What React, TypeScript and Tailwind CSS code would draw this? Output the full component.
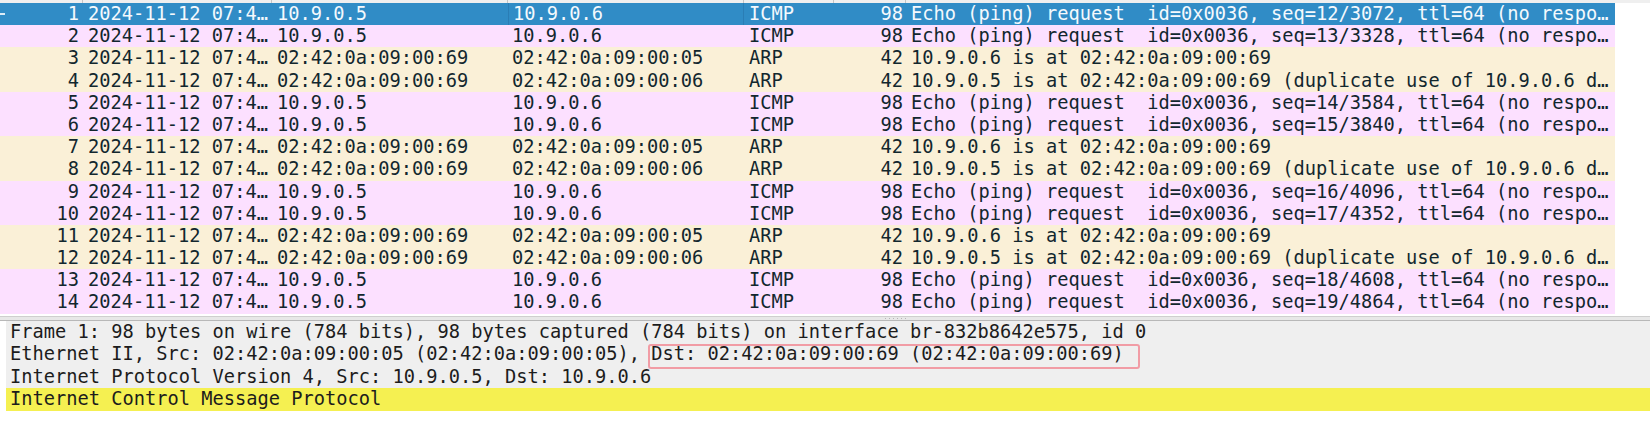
import React from "react";

type Packet = {
  no: number;
  src: string;
  dst: string;
  proto: "ICMP" | "ARP";
  len: number;
  info: string;
};

const MAC69 = "02:42:0a:09:00:69";

const echo = (seq: string) =>
  `Echo (ping) request  id=0x0036, seq=${seq}, ttl=64 (no respo…`;
const arpIs6 = "10.9.0.6 is at 02:42:0a:09:00:69";
const arpDup = "10.9.0.5 is at 02:42:0a:09:00:69 (duplicate use of 10.9.0.6 d…";

const packets: Packet[] = [
  { no: 1, src: "10.9.0.5", dst: "10.9.0.6", proto: "ICMP", len: 98, info: echo("12/3072") },
  { no: 2, src: "10.9.0.5", dst: "10.9.0.6", proto: "ICMP", len: 98, info: echo("13/3328") },
  { no: 3, src: MAC69, dst: "02:42:0a:09:00:05", proto: "ARP", len: 42, info: arpIs6 },
  { no: 4, src: MAC69, dst: "02:42:0a:09:00:06", proto: "ARP", len: 42, info: arpDup },
  { no: 5, src: "10.9.0.5", dst: "10.9.0.6", proto: "ICMP", len: 98, info: echo("14/3584") },
  { no: 6, src: "10.9.0.5", dst: "10.9.0.6", proto: "ICMP", len: 98, info: echo("15/3840") },
  { no: 7, src: MAC69, dst: "02:42:0a:09:00:05", proto: "ARP", len: 42, info: arpIs6 },
  { no: 8, src: MAC69, dst: "02:42:0a:09:00:06", proto: "ARP", len: 42, info: arpDup },
  { no: 9, src: "10.9.0.5", dst: "10.9.0.6", proto: "ICMP", len: 98, info: echo("16/4096") },
  { no: 10, src: "10.9.0.5", dst: "10.9.0.6", proto: "ICMP", len: 98, info: echo("17/4352") },
  { no: 11, src: MAC69, dst: "02:42:0a:09:00:05", proto: "ARP", len: 42, info: arpIs6 },
  { no: 12, src: MAC69, dst: "02:42:0a:09:00:06", proto: "ARP", len: 42, info: arpDup },
  { no: 13, src: "10.9.0.5", dst: "10.9.0.6", proto: "ICMP", len: 98, info: echo("18/4608") },
  { no: 14, src: "10.9.0.5", dst: "10.9.0.6", proto: "ICMP", len: 98, info: echo("19/4864") },
];

function PacketRow({ p }: { p: Packet }) {
  const selected = p.no === 1;
  const rowColor = selected
    ? "bg-[#308cc6] text-[#f4f9fd]"
    : p.proto === "ICMP"
      ? "bg-[#fce0ff] text-[#12272e]"
      : "bg-[#faf0d7] text-[#12272e]";

  return (
    <div className={`relative flex h-[22.2px] w-[1615px] items-center whitespace-pre ${rowColor}`}>
      {selected && <div className="absolute left-0 top-[10px] h-[1.5px] w-[5px] bg-[#dcecf7]" />}
      <div className="w-[83px] shrink-0 pr-[4px] text-right">{p.no}</div>
      <div className="w-[189px] shrink-0 pl-[5px]">2024-11-12 07:4…</div>
      <div className="w-[236px] shrink-0 pl-[5px]">{p.src}</div>
      <div
        className={`flex h-full w-[236px] shrink-0 items-center pl-[4px] ${
          selected ? "border-x border-[#2a7db5]" : ""
        }`}
      >
        {p.dst}
      </div>
      <div className="w-[90px] shrink-0 pl-[5px]">{p.proto}</div>
      <div className="w-[72px] shrink-0 pr-[3px] text-right">{p.len}</div>
      <div className="w-[709px] shrink-0 pl-[5px]">{p.info}</div>
    </div>
  );
}

export default function App() {
  return (
    <div
      className="h-[434px] w-[1650px] overflow-hidden bg-white text-[18.7px] leading-[22.2px]"
      style={{ fontFamily: '"DejaVu Sans Mono", "Liberation Mono", monospace' }}
    >
      {/* column header bottom edge */}
      <div className="flex h-[3px] w-full bg-[#efefef]">
        <div className="w-[83px] border-r border-[#c4c4c4]" />
        <div className="w-[189px] border-r border-[#c4c4c4]" />
        <div className="w-[236px] border-r border-[#c4c4c4]" />
        <div className="w-[236px] border-r border-[#c4c4c4]" />
        <div className="w-[90px] border-r border-[#c4c4c4]" />
        <div className="w-[72px] border-r border-[#c4c4c4]" />
      </div>

      <div className="flex flex-col">
        {packets.map((p) => (
          <PacketRow key={p.no} p={p} />
        ))}
      </div>

      {/* splitter */}
      <div className="h-[2px] bg-white" />
      <div className="flex h-[5px] flex-col">
        <div className="h-[1px] bg-[#cfcfcf]" />
        <div className="flex h-[3px] items-center justify-center bg-[#e8e8e8]">
          <div className="flex gap-[3px] pl-[140px]">
            {[0, 1, 2, 3, 4, 5].map((i) => (
              <div key={i} className="h-[1px] w-[1px] bg-[#b5b5b5]" />
            ))}
          </div>
        </div>
        <div className="h-[1px] bg-[#b8b8b8]" />
      </div>

      {/* packet details */}
      <div className="flex">
        <div className="w-[6px] shrink-0 bg-white" />
        <div className="flex flex-1 flex-col bg-[#efefef] text-[#1c1c1c] leading-[22.6px] whitespace-pre">
          <div className="h-[22.6px] pl-[4px]">
            Frame 1: 98 bytes on wire (784 bits), 98 bytes captured (784 bits) on interface br-832b8642e575, id 0
          </div>
          <div className="relative h-[22.6px] pl-[4px]">
            Ethernet II, Src: 02:42:0a:09:00:05 (02:42:0a:09:00:05), Dst: 02:42:0a:09:00:69 (02:42:0a:09:00:69)
            <div className="absolute left-[642px] top-[0.5px] h-[25.5px] w-[492px] rounded-[3px] border-2 border-[#f19ca5]" />
          </div>
          <div className="h-[22.6px] pl-[4px]">
            Internet Protocol Version 4, Src: 10.9.0.5, Dst: 10.9.0.6
          </div>
          <div className="h-[22.6px] bg-[#f5f051] pl-[4px]">Internet Control Message Protocol</div>
        </div>
      </div>
    </div>
  );
}
